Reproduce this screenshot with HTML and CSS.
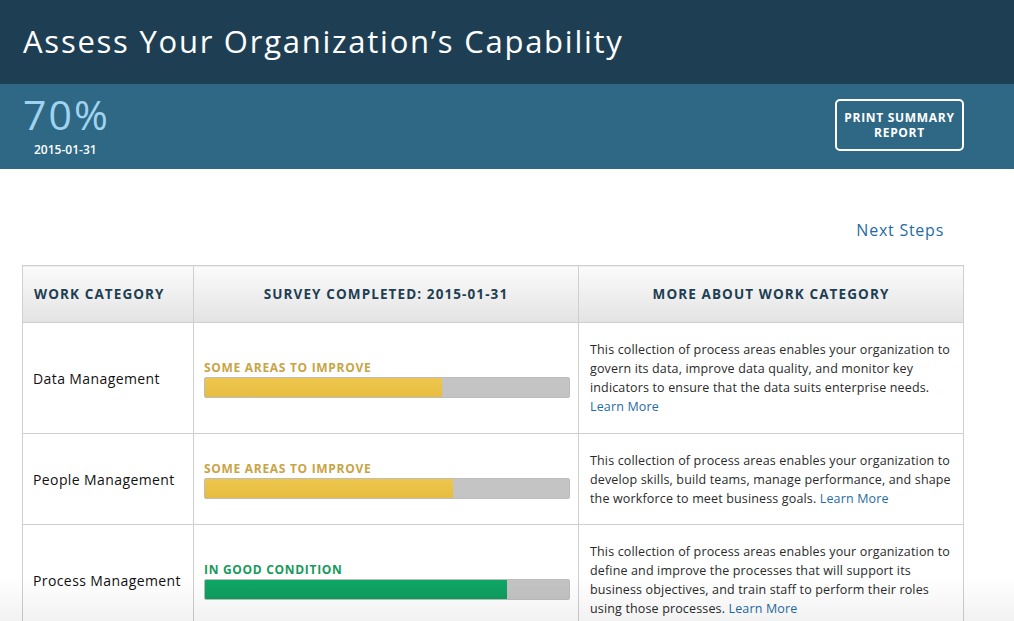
FILE: index.html
```html
<!DOCTYPE html>
<html>
<head>
<meta charset="utf-8">
<link rel="stylesheet" href="styles.css">
</head>
<body>
<header class="topbar">
  <h1 class="title">Assess Your Organization’s Capability</h1>
</header>
<section class="scorebar">
  <div class="score">
    <div class="pct">70%</div>
    <div class="date">2015-01-31</div>
  </div>
  <button class="print">PRINT SUMMARY<br>REPORT</button>
</section>
<main class="content">
  <div class="next"><a href="#">Next Steps</a></div>
  <table class="grid">
    <colgroup>
      <col class="w1">
      <col class="w2">
      <col class="w3">
    </colgroup>
    <thead>
      <tr>
        <th class="c1">WORK CATEGORY</th>
        <th class="c2">SURVEY COMPLETED: 2015-01-31</th>
        <th class="c3">MORE ABOUT WORK CATEGORY</th>
      </tr>
    </thead>
    <tbody>
      <tr class="r1">
        <td class="c1">Data Management</td>
        <td class="c2">
          <div class="status warn">SOME AREAS TO IMPROVE</div>
          <div class="bar"><div class="fill warn-fill" style="width:65%"></div></div>
        </td>
        <td class="c3">This collection of process areas enables your organization to govern its data, improve data quality, and monitor key indicators to ensure that the data suits enterprise needs. <a href="#">Learn More</a></td>
      </tr>
      <tr class="r2">
        <td class="c1">People Management</td>
        <td class="c2">
          <div class="status warn">SOME AREAS TO IMPROVE</div>
          <div class="bar"><div class="fill warn-fill" style="width:68%"></div></div>
        </td>
        <td class="c3">This collection of process areas enables your organization to develop skills, build teams, manage performance, and shape the workforce to meet business goals. <a href="#">Learn More</a></td>
      </tr>
      <tr class="r3">
        <td class="c1">Process Management</td>
        <td class="c2">
          <div class="status good">IN GOOD CONDITION</div>
          <div class="bar"><div class="fill good-fill" style="width:83%"></div></div>
        </td>
        <td class="c3">This collection of process areas enables your organization to define and improve the processes that will support its business objectives, and train staff to perform their roles using those processes. <a href="#">Learn More</a></td>
      </tr>
    </tbody>
  </table>
</main>
<div class="fade"></div>
</body>
</html>
```

FILE: styles.css
```css
html, body {
  margin: 0;
  padding: 0;
  background: #fff;
  font-family: "Open Sans", "Liberation Sans", sans-serif;
  overflow: hidden;
}

.topbar {
  background: #1e3f53;
  height: 84px;
  display: flex;
  align-items: center;
  padding: 0 23px;
  box-sizing: border-box;
}

.title {
  margin: 0;
  color: #fff;
  font-weight: 400;
  font-size: 31px;
  letter-spacing: 1.75px;
  padding-bottom: 3px;
}

.scorebar {
  background: #2e6884;
  height: 85px;
  display: flex;
  justify-content: space-between;
  align-items: flex-start;
  padding: 0 50px 0 23px;
  box-sizing: border-box;
}

.score {
  display: flex;
  flex-direction: column;
}

.pct {
  color: #9fd3ef;
  font-size: 41px;
  font-weight: 400;
  line-height: 40px;
  margin-top: 10px;
  letter-spacing: 2px;
}

.date {
  color: #fff;
  font-size: 12px;
  font-weight: 600;
  margin-top: 7px;
  margin-left: 11px;
}

.print {
  margin-top: 15px;
  width: 129px;
  height: 52px;
  background: transparent;
  border: 2px solid #fff;
  border-radius: 5px;
  color: #fff;
  font-family: "Open Sans", "Liberation Sans", sans-serif;
  font-size: 12px;
  font-weight: 700;
  line-height: 15px;
  letter-spacing: 0.7px;
  padding: 0;
}

.content {
  padding: 50px 51px 0 22px;
}

.next {
  text-align: right;
  padding-right: 19px;
  height: 46px;
}

.next a {
  color: #1f6da3;
  text-decoration: none;
  font-size: 16px;
  letter-spacing: 0.75px;
}

.grid {
  width: 941px;
  border-collapse: collapse;
  table-layout: fixed;
}

.w1 { width: 171px; }
.w2 { width: 385px; }
.w3 { width: 385px; }

.grid th, .grid td {
  border: 1px solid #cfcfcf;
}

.grid th {
  height: 56px;
  background: linear-gradient(#fbfbfb, #e3e3e3);
  color: #1e3f53;
  font-size: 13.5px;
  font-weight: 700;
  letter-spacing: 1.1px;
  padding: 0;
}

.grid th.c1 { text-align: left; padding-left: 11px; }

.grid td {
  vertical-align: middle;
  font-size: 13.5px;
  color: #111;
}

.grid td.c1 {
  padding: 0 10px;
  font-size: 14px;
  letter-spacing: 0.4px;
}

.grid td.c2 {
  padding: 0 8px 0 10px;
}

.grid td.c3 {
  padding: 8px 8px 8px 11px;
  font-size: 12.5px;
  line-height: 19px;
  letter-spacing: 0.15px;
  color: #2a2a2a;
}

.grid td.c3 a {
  color: #1f6da3;
  text-decoration: none;
}

.r1 td { height: 94px; }
.r2 td { height: 74px; }
.r3 td { height: 94px; }

.status {
  font-size: 12px;
  font-weight: 700;
  letter-spacing: 0.7px;
  margin-top: 0;
  margin-bottom: 1px;
}

.warn { color: #c9a445; }
.good { color: #159a5b; }

.bar {
  height: 21px;
  background: #c4c4c4;
  border: 1px solid #bdbdbd;
  border-radius: 2px;
  box-sizing: border-box;
  overflow: hidden;
}

.fill { height: 100%; }
.warn-fill { background: linear-gradient(#edc64d, #e7bd3f); }
.good-fill { background: linear-gradient(#10a867, #0f9d5f); }

.fade {
  position: fixed;
  left: 0;
  right: 0;
  bottom: 0;
  height: 45px;
  background: linear-gradient(rgba(0,0,0,0), rgba(0,0,0,0.05));
  pointer-events: none;
}
```
